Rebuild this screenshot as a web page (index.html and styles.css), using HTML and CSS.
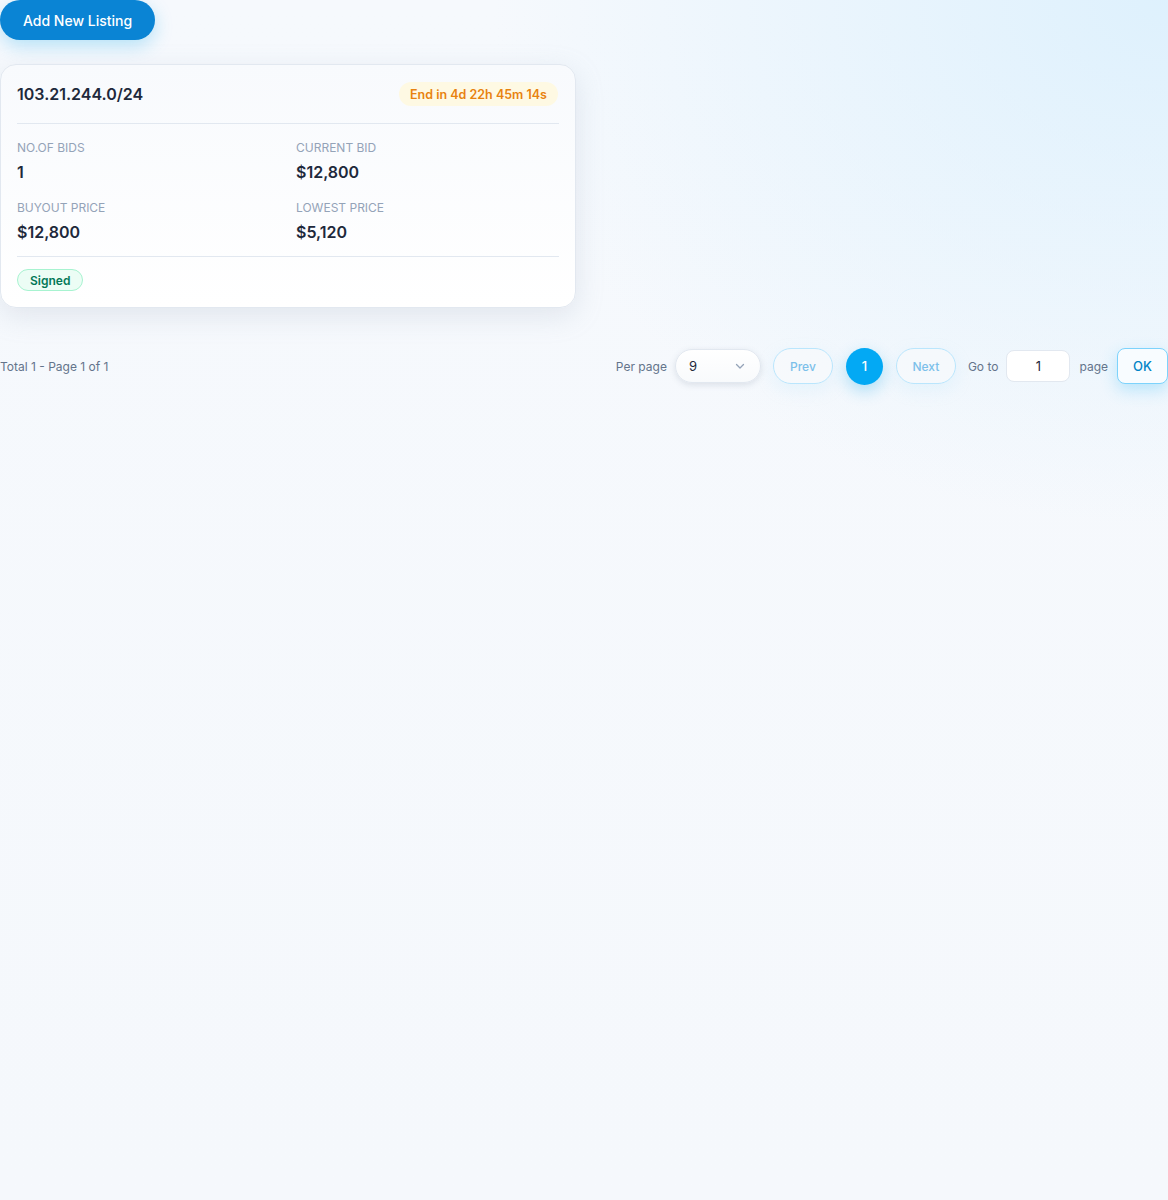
FILE: index.html
```html
<!DOCTYPE html>
<html lang="en">
<head>
<meta charset="utf-8">
<title>Listings</title>
<link rel="stylesheet" href="styles.css">
</head>
<body>
<div class="page">
  <div class="toolbar">
    <button class="btn-primary">Add New Listing</button>
  </div>

  <div class="grid">
    <div class="card">
      <div class="card-head">
        <div class="title">103.21.244.0/24</div>
        <div class="badge-time">End in 4d 22h 45m 14s</div>
      </div>
      <div class="stats">
        <div class="stat">
          <div class="label">NO.OF BIDS</div>
          <div class="value">1</div>
        </div>
        <div class="stat">
          <div class="label">CURRENT BID</div>
          <div class="value">$12,800</div>
        </div>
        <div class="stat">
          <div class="label">BUYOUT PRICE</div>
          <div class="value">$12,800</div>
        </div>
        <div class="stat">
          <div class="label">LOWEST PRICE</div>
          <div class="value">$5,120</div>
        </div>
      </div>
      <div class="card-foot">
        <span class="badge-signed">Signed</span>
      </div>
    </div>
  </div>

  <div class="pager">
    <div class="pager-total">Total 1 - Page 1 of 1</div>
    <div class="pager-controls">
      <span class="pager-text">Per page</span>
      <div class="select">
        <span>9</span>
        <svg width="12" height="12" viewBox="0 0 12 12" fill="none"><path d="M2.5 4.5L6 8L9.5 4.5" stroke="#94a3b8" stroke-width="1.3" stroke-linecap="round" stroke-linejoin="round"/></svg>
      </div>
      <button class="pg-btn pg-prev">Prev</button>
      <button class="pg-num">1</button>
      <button class="pg-btn pg-next">Next</button>
      <span class="pager-text goto-label">Go to</span>
      <div class="goto">1</div>
      <span class="pager-text">page</span>
      <button class="ok-btn">OK</button>
    </div>
  </div>
</div>
</body>
</html>
```
FILE: styles.css
```css
* { box-sizing: border-box; }
html, body { margin: 0; padding: 0; }
body {
  min-height: 1200px;
  font-family: Inter, "Noto Sans", "Liberation Sans", sans-serif;
  color: #1e293b;
  background:
    radial-gradient(ellipse 900px 700px at 100% 0%, rgba(214, 238, 253, 0.75), rgba(214, 238, 253, 0) 75%),
    linear-gradient(180deg, #f6f9fd 0%, #f5f8fc 100%);
  background-color: #f5f8fc;
}
.page { width: 1168px; }

.toolbar { display: flex; }
.btn-primary {
  height: 40px;
  padding: 0 23px;
  border: none;
  border-radius: 999px;
  background: #0a84d4;
  color: #fff;
  font-family: inherit;
  font-size: 14px;
  font-weight: 500;
  box-shadow: 0 6px 18px rgba(14, 165, 233, 0.28);
}

.grid { margin-top: 24px; display: grid; grid-template-columns: 576px; }
.card {
  border: 1px solid #e2e8f0;
  border-radius: 16px;
  background: linear-gradient(180deg, #f8fafd 0%, #ffffff 100%);
  padding: 0 16px;
  box-shadow: 0 8px 28px rgba(148, 163, 184, 0.22);
}
.card-head {
  display: flex;
  align-items: center;
  justify-content: space-between;
  padding: 16px 0;
  border-bottom: 1px solid #e2e8f0;
  height: 59px;
}
.title { font-size: 16px; font-weight: 600; color: #1e293b; }
.badge-time {
  height: 24px;
  display: flex;
  align-items: center;
  padding: 0 11px;
  border-radius: 999px;
  background: #fef9e3;
  color: #e8820f;
  font-size: 12.5px;
  font-weight: 600;
  margin-right: 1px;
}
.stats {
  display: grid;
  grid-template-columns: 1fr 1fr;
  column-gap: 16px;
  row-gap: 16px;
  padding: 16px 0 12px;
  border-bottom: 1px solid #e2e8f0;
}
.label {
  font-size: 12px;
  line-height: 16px;
  color: #94a3b8;
}
.value {
  margin-top: 4px;
  font-size: 16px;
  line-height: 24px;
  font-weight: 600;
  color: #1e293b;
}
.card-foot { padding: 12px 0 16px; display: flex; }
.badge-signed {
  height: 22px;
  display: inline-flex;
  align-items: center;
  padding: 0 12px;
  border-radius: 999px;
  border: 1px solid #a7f3d0;
  background: #ecfdf5;
  color: #047857;
  font-size: 12px;
  font-weight: 600;
}

.pager {
  margin-top: 39px;
  height: 38px;
  display: flex;
  align-items: center;
  justify-content: space-between;
}
.pager-total { font-size: 12px; color: #64748b; }
.pager-controls { display: flex; align-items: center; }
.pager-text { font-size: 12px; color: #64748b; }
.select {
  margin-left: 8px;
  width: 86px;
  height: 34px;
  border-radius: 999px;
  background: linear-gradient(180deg, #ffffff, #f8fafc);
  border: 1px solid #e2e8f0;
  box-shadow: 0 2px 6px rgba(100, 116, 139, 0.18);
  display: flex;
  align-items: center;
  justify-content: space-between;
  padding: 0 14px 0 13px;
  font-size: 13px;
  color: #1e293b;
}
.pg-btn {
  width: 60px;
  height: 36px;
  border-radius: 999px;
  border: 1px solid #bae6fd;
  background: rgba(248, 250, 252, 0.6);
  color: #7cc0ea;
  font-family: inherit;
  font-size: 12px;
  font-weight: 500;
  box-shadow: 0 6px 16px rgba(186, 230, 253, 0.25);
}
.pg-prev { margin-left: 12px; }
.pg-next { margin-left: 13px; }
.pg-num {
  margin-left: 13px;
  width: 37px;
  height: 37px;
  border-radius: 50%;
  border: none;
  background: #03a9f4;
  color: #fff;
  font-family: inherit;
  font-size: 13px;
  font-weight: 500;
  box-shadow: 0 6px 16px rgba(14, 165, 233, 0.3);
}
.goto-label { margin-left: 12px; }
.goto {
  margin-left: 8px;
  width: 64px;
  height: 32px;
  border-radius: 8px;
  border: 1px solid #e2e8f0;
  background: #fff;
  display: flex;
  align-items: center;
  justify-content: center;
  font-size: 13px;
  color: #1e293b;
}
.goto + .pager-text { margin-left: 9px; }
.ok-btn {
  margin-left: 9px;
  width: 51px;
  height: 36px;
  border-radius: 8px;
  border: 1px solid #7dd3fc;
  background: #f8fcff;
  color: #0284c7;
  font-family: inherit;
  font-size: 13px;
  font-weight: 500;
  box-shadow: 0 6px 16px rgba(56, 189, 248, 0.3);
}
```
